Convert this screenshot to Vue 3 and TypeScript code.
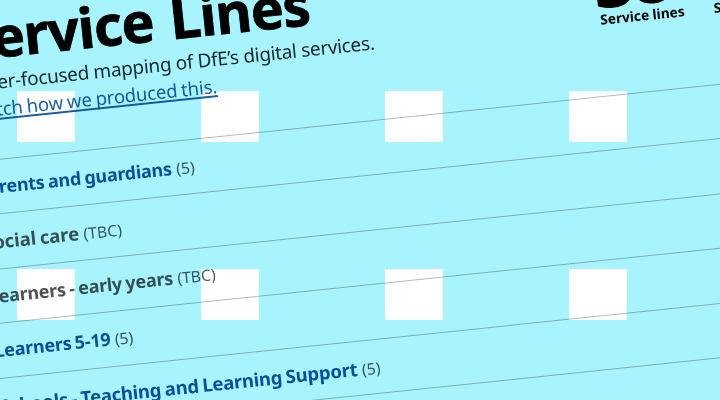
<script setup lang="ts">
interface ServiceRow {
  name: string
  count: string
  muted?: boolean
  fit: string
}

const rows: ServiceRow[] = [
  { name: 'Parents and guardians', count: '(5)', fit: 'tight' },
  { name: 'Social care', count: '(TBC)', muted: true, fit: 'loose' },
  { name: 'Learners - early years', count: '(TBC)', muted: true, fit: 'tight' },
  { name: 'Learners 5-19', count: '(5)', fit: 'tight' },
  { name: 'Schools - Teaching and Learning Support', count: '(5)', fit: 'normal' },
]
const tiles = 8
</script>

<template>
  <main class="stage">
    <div class="tiles">
      <i v-for="n in tiles" :key="n" class="tile"></i>
    </div>
    <section class="sheet">
      <header class="top">
        <div class="intro">
          <h1>Service Lines</h1>
          <p class="lead">A user-focused mapping of DfE’s digital services.</p>
          <p class="watch"><a>Watch how we produced this.</a></p>
        </div>
        <div class="stat">
          <strong>38</strong>
          <span>Service lines</span>
        </div>
        <div class="stat">
          <strong>98</strong>
          <span>Services</span>
        </div>
      </header>
      <ul class="rows">
        <li v-for="row in rows" :key="row.name" :class="['row', row.fit, { muted: row.muted }]">
          <b>{{ row.name }}</b><span>{{ row.count }}</span>
        </li>
        <li class="row"></li>
      </ul>
    </section>
  </main>
</template>

<style>
body {
  margin: 0;
  overflow: hidden;
}
</style>

<style scoped>
.stage {
  position: relative;
  width: 720px;
  height: 400px;
  overflow: hidden;
  background: #a8f4fe;
  font-family: 'Noto Sans', 'Open Sans', sans-serif;
  isolation: isolate;
}
.tiles {
  display: grid;
  grid-template-columns: repeat(4, 57.4px);
  grid-auto-rows: 51.4px;
  column-gap: 126.6px;
  row-gap: 126.6px;
  padding: 91px 0 0 17.3px;
}
.tile {
  background: #fff;
}
.sheet {
  position: absolute;
  left: 0;
  top: 0;
  width: 900px;
  transform: rotate(-5.95deg);
  transform-origin: 0 0;
  mix-blend-mode: multiply;
}
.top {
  display: flex;
  height: 158px;
  margin-left: -42px;
}
.intro {
  width: 637px;
  flex: none;
}
h1,
p {
  margin: 0;
  white-space: nowrap;
}
h1 {
  font-size: 55.5px;
  line-height: 60px;
  height: 62px;
  padding-top: 6px;
  font-weight: 700;
  letter-spacing: -0.9px;
  word-spacing: 3px;
  -webkit-text-stroke: 0.8px #000;
  color: #000;
}
.lead {
  font-size: 19px;
  line-height: 26px;
  letter-spacing: -0.3px;
  margin-left: -6px;
  color: #262b2d;
}
.watch {
  font-size: 18.6px;
  line-height: 27px;
  letter-spacing: -0.2px;
  word-spacing: -0.6px;
  color: #1d5f9c;
}
.watch a {
  text-decoration: underline;
  text-decoration-thickness: 1.5px;
  text-underline-offset: 2px;
  text-decoration-skip-ink: none;
}
.stat {
  flex: none;
  width: 114px;
  color: #000;
}
.stat strong {
  display: block;
  font-size: 70px;
  line-height: 60px;
  height: 60px;
  padding-top: 13px;
  margin-left: -3px;
  letter-spacing: -2px;
  -webkit-text-stroke: 1px #000;
}
.stat span {
  display: block;
  font-size: 13.7px;
  line-height: 18px;
  font-weight: 700;
  white-space: nowrap;
}
.rows {
  list-style: none;
  margin: 0 0 0 -42px;
  padding: 0;
}
.row {
  display: flex;
  align-items: baseline;
  gap: 4.5px;
  box-sizing: border-box;
  height: 54.4px;
  border-top: 1px solid #b9bab9;
  line-height: 53px;
  white-space: nowrap;
  color: #0c549a;
}
.row b {
  font-size: 18.5px;
  word-spacing: -1px;
}
.row.tight b {
  font-size: 18px;
  letter-spacing: -0.23px;
}
.row.normal b {
  letter-spacing: -0.21px;
}
.row.loose b {
  letter-spacing: -0.05px;
}
.row span {
  font-size: 15.8px;
  color: #505a5f;
}
.row.muted {
  color: #505355;
}
</style>
